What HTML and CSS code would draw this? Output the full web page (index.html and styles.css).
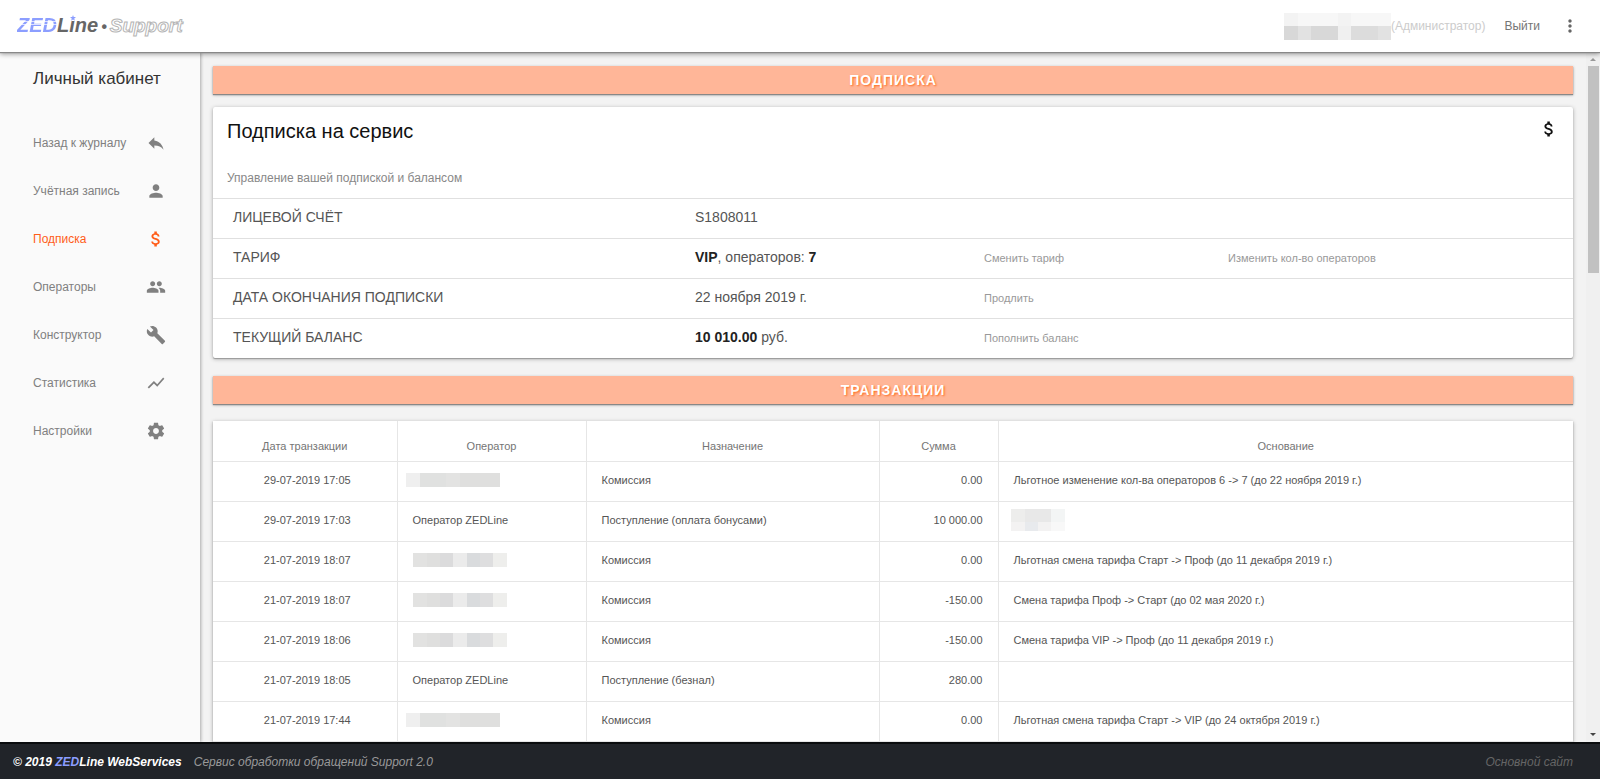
FILE: index.html
```html
<!DOCTYPE html>
<html lang="ru">
<head>
<meta charset="utf-8">
<title>ZEDLine Support — Подписка</title>
<link rel="stylesheet" href="styles.css">
</head>
<body>
<svg class="defs" aria-hidden="true">
  <symbol id="dollar" viewBox="0 0 24 24"><path d="M11.800 10.900c-2.270-.59-3-1.200-3-2.150 0-1.090 1.010-1.850 2.700-1.850 1.780 0 2.440.85 2.500 2.100h2.210c-.07-1.720-1.120-3.300-3.210-3.810V3h-3v2.160c-1.940.42-3.500 1.680-3.500 3.610 0 2.310 1.910 3.460 4.700 4.130 2.500.6 3 1.480 3 2.410 0 .69-.49 1.790-2.700 1.790-2.060 0-2.870-.92-2.980-2.100h-2.200c.12 2.190 1.760 3.420 3.680 3.830V21h3v-2.150c1.950-.37 3.500-1.500 3.500-3.550 0-2.840-2.430-3.810-4.700-4.400z"/></symbol>
  <symbol id="mosaic" viewBox="0 0 94 14">
    <path fill="#e2e2e1" d="M0 0h14v14H0z"/><path fill="#dfdfde" d="M14 0h13v14H14z"/><path fill="#dbdbdc" d="M27 0h13v14H27z"/><path fill="#ebebeb" d="M40 0h14v14H40z"/><path fill="#d9dbdd" d="M54 0h13v14H54z"/><path fill="#dededf" d="M67 0h13v14H67z"/><path fill="#eeeeec" d="M80 0h14v14H80z"/>
  </symbol>
  <symbol id="mosaic-pale" viewBox="0 0 94 14">
    <path fill="#efefef" d="M0 0h14v14H0z"/><path fill="#e0e1e0" d="M14 0h26v14H14z"/><path fill="#e3e3e2" d="M40 0h14v14H40z"/><path fill="#dfdfde" d="M54 0h40v14H54z"/>
  </symbol>
</svg>

<header class="top">
  <a class="logo" href="#"><span class="zed">ZED</span><span class="line">L<span class="star-i">i<svg viewBox="0 0 10 10"><path d="M5 0l1.300 3.300 3.700.2-2.900 2.300 1 3.700L5 7.400 1.900 9.500l1-3.700L0 3.500l3.700-.2z"/></svg></span>ne</span><span class="dot">•</span><span class="support">Support</span></a>
  <div class="user">
    <svg class="user-name" viewBox="0 0 107 27" role="img" aria-label="Имя скрыто"><path fill="#f3f3f3" d="M0 0h14v13H0zM54 0h13v13H54z"/><path fill="#f7f7f7" d="M14 0h40v13H14zM67 0h40v13H67z"/><path fill="#d8d8d8" d="M0 13h14v14H0zM27 13h27v14H27z"/><path fill="#e2e2e2" d="M14 13h13v14H14zM94 13h13v14H94z"/><path fill="#f0f0f0" d="M54 13h13v14H54z"/><path fill="#dcdcdc" d="M67 13h27v14H67z"/></svg>
    <span class="role">(Администратор)</span>
  </div>
  <a class="exit" href="#">Выйти</a>
  <button class="more" type="button" aria-label="Меню"><svg viewBox="0 0 24 24"><path d="M12 8c1.100 0 2-.9 2-2s-.9-2-2-2-2 .9-2 2 .9 2 2 2zm0 2c-1.100 0-2 .9-2 2s.9 2 2 2 2-.9 2-2-.9-2-2-2zm0 6c-1.100 0-2 .9-2 2s.9 2 2 2 2-.9 2-2-.9-2-2-2z"/></svg></button>
</header>

<div class="body">
  <nav class="side">
    <h2 class="side-title">Личный кабинет</h2>
    <a href="#">Назад к журналу<svg viewBox="0 0 24 24"><path d="M10 9V5l-7 7 7 7v-4.100c5 0 8.500 1.600 11 5.100-1-5-4-10-11-11z"/></svg></a>
    <a href="#">Учётная запись<svg viewBox="0 0 24 24"><path d="M12 12c2.210 0 4-1.790 4-4s-1.790-4-4-4-4 1.790-4 4 1.790 4 4 4zm0 2c-2.670 0-8 1.340-8 4v2h16v-2c0-2.660-5.330-4-8-4z"/></svg></a>
    <a href="#" class="active">Подписка<svg><use href="#dollar"/></svg></a>
    <a href="#">Операторы<svg viewBox="0 0 24 24"><path d="M16 11c1.660 0 2.990-1.340 2.990-3S17.660 5 16 5c-1.660 0-3 1.340-3 3s1.340 3 3 3zm-8 0c1.660 0 2.990-1.340 2.990-3S9.660 5 8 5C6.340 5 5 6.340 5 8s1.340 3 3 3zm0 2c-2.330 0-7 1.170-7 3.500V19h14v-2.500c0-2.330-4.670-3.500-7-3.500zm8 0c-.29 0-.62.02-.97.05 1.160.84 1.970 1.970 1.970 3.450V19h6v-2.500c0-2.330-4.670-3.500-7-3.500z"/></svg></a>
    <a href="#">Конструктор<svg viewBox="0 0 24 24"><path d="M22.700 19l-9.100-9.100c.9-2.300.4-5-1.500-6.900-2-2-5-2.400-7.400-1.300L9 6 6 9 1.600 4.700C.4 7.100.9 10.100 2.900 12.100c1.900 1.900 4.600 2.400 6.900 1.500l9.100 9.100c.4.4 1 .4 1.400 0l2.300-2.300c.5-.4.5-1.100.1-1.400z"/></svg></a>
    <a href="#">Статистика<svg viewBox="0 0 24 24"><path d="M3.500 18.490l6-6.010 4 4L22 6.920l-1.410-1.410-7.090 7.970-4-4L2 16.990z"/></svg></a>
    <a href="#">Настройки<svg viewBox="0 0 24 24"><path d="M19.430 12.980c.04-.32.07-.64.07-.98s-.03-.66-.07-.98l2.110-1.650c.19-.15.24-.42.12-.64l-2-3.460c-.12-.22-.39-.3-.61-.22l-2.490 1c-.52-.4-1.080-.73-1.690-.98l-.38-2.650C14.460 2.180 14.250 2 14 2h-4c-.25 0-.46.18-.49.42l-.38 2.650c-.61.25-1.170.59-1.690.98l-2.490-1c-.23-.09-.49 0-.61.22l-2 3.460c-.13.22-.07.49.12.64l2.110 1.650c-.04.32-.07.65-.07.98s.03.66.07.98l-2.110 1.650c-.19.15-.24.42-.12.64l2 3.460c.12.22.39.3.61.22l2.490-1c.52.4 1.080.73 1.690.98l.38 2.650c.03.24.24.42.49.42h4c.25 0 .46-.18.49-.42l.38-2.650c.61-.25 1.170-.59 1.690-.98l2.490 1c.23.09.49 0 .61-.22l2-3.460c.12-.22.07-.49-.12-.64l-2.110-1.650zM12 15.500c-1.930 0-3.500-1.570-3.500-3.500s1.570-3.500 3.500-3.500 3.500 1.570 3.500 3.500-1.570 3.500-3.500 3.500z"/></svg></a>
  </nav>

  <main class="content">
    <h1 class="bar">Подписка</h1>
    <section class="card">
      <div class="card-head">
        <h2>Подписка на сервис</h2>
        <svg><use href="#dollar"/></svg>
      </div>
      <p class="lead">Управление вашей подпиской и балансом</p>
      <dl class="info">
        <div><dt>Лицевой счёт</dt><dd>S1808011</dd></div>
        <div><dt>Тариф</dt><dd><b>VIP</b>, операторов: <b>7</b></dd><dd><a href="#">Сменить тариф</a></dd><dd><a href="#">Изменить кол-во операторов</a></dd></div>
        <div><dt>Дата окончания подписки</dt><dd>22 ноября 2019 г.</dd><dd><a href="#">Продлить</a></dd></div>
        <div><dt>Текущий баланс</dt><dd><b>10 010.00</b> руб.</dd><dd><a href="#">Пополнить баланс</a></dd></div>
      </dl>
    </section>

    <h1 class="bar">Транзакции</h1>
    <table class="log">
      <colgroup><col class="c-date"><col class="c-oper"><col class="c-kind"><col class="c-sum"><col></colgroup>
      <thead><tr><th>Дата транзакции</th><th>Оператор</th><th>Назначение</th><th>Сумма</th><th>Основание</th></tr></thead>
      <tbody>
        <tr><td>29-07-2019 17:05</td><td class="wide"><svg class="mosaic"><use href="#mosaic-pale"/></svg></td><td>Комиссия</td><td>0.00</td><td>Льготное изменение кол-ва операторов 6 -&gt; 7 (до 22 ноября 2019 г.)</td></tr>
        <tr><td>29-07-2019 17:03</td><td>Оператор ZEDLine</td><td>Поступление (оплата бонусами)</td><td>10 000.00</td><td class="noted"><svg class="note" viewBox="0 0 54 22"><path fill="#ededec" d="M0 0h14v13H0z"/><path fill="#e8e8e8" d="M14 0h26v13H14z"/><path fill="#f3f5f5" d="M40 0h14v13H40z"/><path fill="#f3f2f2" d="M0 13h14v9H0zM27 13h13v9H27z"/><path fill="#e8eaed" d="M14 13h13v9H14z"/><path fill="#f8f8f8" d="M40 13h14v9H40z"/></svg></td></tr>
        <tr><td>21-07-2019 18:07</td><td><svg class="mosaic"><use href="#mosaic"/></svg></td><td>Комиссия</td><td>0.00</td><td>Льготная смена тарифа Старт -&gt; Проф (до 11 декабря 2019 г.)</td></tr>
        <tr><td>21-07-2019 18:07</td><td><svg class="mosaic"><use href="#mosaic"/></svg></td><td>Комиссия</td><td>-150.00</td><td>Смена тарифа Проф -&gt; Старт (до 02 мая 2020 г.)</td></tr>
        <tr><td>21-07-2019 18:06</td><td><svg class="mosaic"><use href="#mosaic"/></svg></td><td>Комиссия</td><td>-150.00</td><td>Смена тарифа VIP -&gt; Проф (до 11 декабря 2019 г.)</td></tr>
        <tr><td>21-07-2019 18:05</td><td>Оператор ZEDLine</td><td>Поступление (безнал)</td><td>280.00</td><td></td></tr>
        <tr><td>21-07-2019 17:44</td><td class="wide"><svg class="mosaic"><use href="#mosaic-pale"/></svg></td><td>Комиссия</td><td>0.00</td><td>Льготная смена тарифа Старт -&gt; VIP (до 24 октября 2019 г.)</td></tr>
      </tbody>
    </table>
  </main>
  <div class="scroll" aria-hidden="true">
    <svg viewBox="0 0 14 14"><path fill="#999" d="M4 9l3-3 3 3z"/></svg>
    <span class="thumb"></span>
    <svg viewBox="0 0 14 14"><path fill="#444" d="M4 5l3 3 3-3z"/></svg>
  </div>
</div>

<footer class="foot">
  <strong>© 2019 <span class="foot-zed">ZED</span>Line WebServices</strong>
  <span>Сервис обработки обращений Support 2.0</span>
  <a href="#">Основной сайт</a>
</footer>
</body>
</html>
```
FILE: styles.css
```css
* { box-sizing: border-box; }

body {
  margin: 0;
  height: 100vh;
  display: flex;
  flex-direction: column;
  overflow: hidden;
  background: #f3f3f3;
  color: #555;
  font: 12px/16px "Liberation Sans", Arial, sans-serif;
}

a { color: inherit; text-decoration: none; }
h1, h2, p, dl, dd { margin: 0; }
svg { display: block; fill: currentColor; }
.defs { position: absolute; width: 0; height: 0; }

/* Header */
.top {
  flex: none;
  display: flex;
  align-items: center;
  height: 52px;
  padding: 0 20px 0 17px;
  background: #fff;
  box-shadow: 0 1px 1px #888, 0 2px 5px rgba(0, 0, 0, .4);
  z-index: 2;
}

.logo {
  display: flex;
  align-items: baseline;
  margin-right: auto;
  font: italic bold 20px/24px "Liberation Sans", Arial, sans-serif;
}
.zed {
  color: transparent;
  background: linear-gradient(#8c9eff 8px, #dde2ff 8px 9px, #8c9eff 9px 11px, #dde2ff 11px 12px, #8c9eff 12px);
  -webkit-background-clip: text;
  background-clip: text;
}
.line { color: #666; }
.star-i { position: relative; }
.star-i svg {
  position: absolute;
  top: 1px;
  left: 1px;
  width: 6px;
  height: 6px;
  color: #8c9eff;
  background: #fff;
}
.dot { color: #666; margin: 0 3px; font-size: 16px; }
.support { color: #fff; -webkit-text-stroke: 1px #b5b5b5; font-size: 19px; }

.user { display: flex; align-items: center; color: #ccc; }
.user-name { width: 107px; height: 27px; }
.exit { margin: 0 20px 0 19px; color: #757575; }
.more { padding: 0; border: 0; background: none; color: #666; }
.more svg { width: 20px; height: 20px; }

/* Sidebar */
.body { flex: 1; min-height: 0; display: flex; }
.side {
  flex: none;
  width: 200px;
  padding: 0 34px 0 33px;
  background: #fafafa;
  color: #808080;
  box-shadow: 1px 0 3px rgba(0, 0, 0, .3);
}
.side-title {
  margin: 15px 0 40px;
  color: #333;
  font-size: 17px;
  font-weight: 400;
  line-height: 24px;
  white-space: nowrap;
}
.side a {
  display: flex;
  align-items: center;
  justify-content: space-between;
  height: 24px;
  margin-bottom: 24px;
  white-space: nowrap;
}
.side svg { width: 20px; height: 20px; }
.side .active { color: #ff5d19; }

/* Content */
.content { flex: 1; min-width: 0; padding: 14px 13px 0; overflow: hidden; }
.bar {
  margin-bottom: 13px;
  padding-top: 1px;
  background: #ffb698;
  color: #fff;
  font-size: 14px;
  line-height: 27px;
  letter-spacing: 1px;
  text-align: center;
  text-transform: uppercase;
  text-shadow: 1px 1px 2px #ff6a20;
  box-shadow: 0 1px 1px #888, 0 1px 3px rgba(0, 0, 0, .3);
}
.card, .log { background: #fff; box-shadow: 0 1px 1px #999, 0 1px 4px rgba(0, 0, 0, .3); }
.card { margin-bottom: 18px; border-radius: 2px; }
.card-head {
  display: flex;
  align-items: flex-start;
  justify-content: space-between;
  padding: 12px 14px 0;
  color: #111;
}
.card-head h2 { font-size: 20px; font-weight: 400; line-height: 24px; }
.card-head svg { width: 20px; height: 20px; }
.lead { padding: 27px 14px 12px; color: #888; }

.info > div {
  display: grid;
  grid-template-columns: 462fr 289fr 244fr 345fr;
  align-items: center;
  height: 40px;
  padding: 0 0 3px 20px;
  border-top: 1px solid #e0e0e0;
}
.info dt { text-transform: uppercase; }
.info { font-size: 14px; }
.info b { color: #222; }
.info a { color: #999; font-size: 11px; }

.log {
  width: 100%;
  table-layout: fixed;
  border-collapse: collapse;
  margin-top: 17px;
  font-size: 11px;
}
.c-date { width: 184px; }
.c-oper { width: 189px; }
.c-kind { width: 293px; }
.c-sum { width: 119px; }
.log th, .log td {
  height: 40px;
  padding: 0 15px 2px;
  border: 0 solid #e6e6e6;
  border-width: 0 1px 1px 0;
  text-align: left;
}
.log th { padding-top: 12px; color: #757575; font-weight: 400; text-align: center; }
.log td:first-child { text-align: center; padding-left: 20px; }
.log td:nth-child(4) { text-align: right; }
.log td.wide { padding-left: 8px; }
.log td.noted { padding-left: 12px; }
.log tr > :last-child { border-right: 0; }
.mosaic { width: 94px; height: 14px; }
.note { width: 54px; height: 22px; }

.scroll {
  flex: none;
  width: 14px;
  display: flex;
  flex-direction: column;
  background: #f0f0f0;
}
.scroll svg { width: 14px; height: 14px; }
.thumb { flex: none; width: 11px; height: 30%; margin: 0 auto auto; background: #c1c1c1; }

/* Footer */
.foot {
  flex: none;
  display: flex;
  align-items: center;
  gap: 12px;
  height: 37px;
  padding: 0 27px 0 13px;
  border-top: 2px solid #0a0c0e;
  background: #212429;
  color: #999;
  font-size: 12px;
  font-style: italic;
  z-index: 1;
}
.foot strong { color: #fff; }
.foot-zed { color: #8c9eff; }
.foot a { margin-left: auto; color: #666; }
```
